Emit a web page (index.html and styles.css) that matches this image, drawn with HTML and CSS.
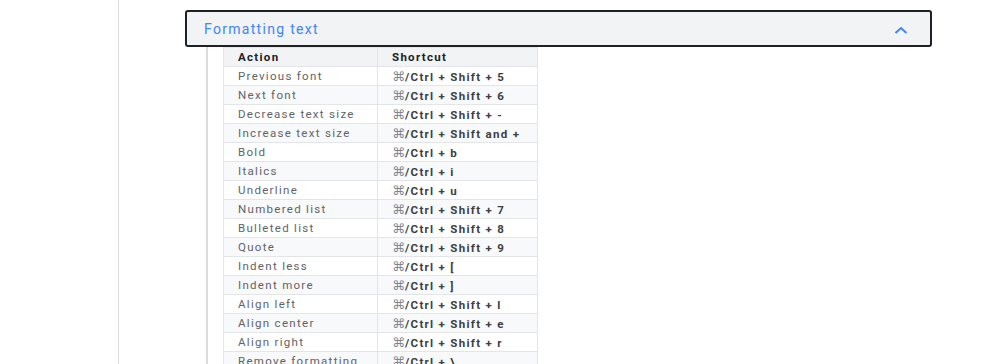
FILE: index.html
```html
<!DOCTYPE html>
<html lang="en">
<head>
  <meta charset="UTF-8">
  <title>Keyboard shortcuts</title>
  <link rel="stylesheet" href="styles.css">
</head>
<body>
  <div class="content">
    <div class="accordion">
      <button class="accordion-head" type="button">
        <span class="accordion-title">Formatting text</span>
        <svg class="chevron" width="14" height="8" viewBox="0 0 14 8">
          <path d="M1.5 7 L7 2 L12.5 7" fill="none" stroke="#4285f4" stroke-width="2"/>
        </svg>
      </button>
      <div class="accordion-body">
        <table class="shortcuts">
          <thead>
            <tr><th>Action</th><th>Shortcut</th></tr>
          </thead>
          <tbody>
            <tr><td>Previous font</td><td><span class="cmd">⌘</span>/Ctrl + Shift + 5</td></tr>
            <tr><td>Next font</td><td><span class="cmd">⌘</span>/Ctrl + Shift + 6</td></tr>
            <tr><td>Decrease text size</td><td><span class="cmd">⌘</span>/Ctrl + Shift + -</td></tr>
            <tr><td>Increase text size</td><td><span class="cmd">⌘</span>/Ctrl + Shift and +</td></tr>
            <tr><td>Bold</td><td><span class="cmd">⌘</span>/Ctrl + b</td></tr>
            <tr><td>Italics</td><td><span class="cmd">⌘</span>/Ctrl + i</td></tr>
            <tr><td>Underline</td><td><span class="cmd">⌘</span>/Ctrl + u</td></tr>
            <tr><td>Numbered list</td><td><span class="cmd">⌘</span>/Ctrl + Shift + 7</td></tr>
            <tr><td>Bulleted list</td><td><span class="cmd">⌘</span>/Ctrl + Shift + 8</td></tr>
            <tr><td>Quote</td><td><span class="cmd">⌘</span>/Ctrl + Shift + 9</td></tr>
            <tr><td>Indent less</td><td><span class="cmd">⌘</span>/Ctrl + [</td></tr>
            <tr><td>Indent more</td><td><span class="cmd">⌘</span>/Ctrl + ]</td></tr>
            <tr><td>Align left</td><td><span class="cmd">⌘</span>/Ctrl + Shift + l</td></tr>
            <tr><td>Align center</td><td><span class="cmd">⌘</span>/Ctrl + Shift + e</td></tr>
            <tr><td>Align right</td><td><span class="cmd">⌘</span>/Ctrl + Shift + r</td></tr>
            <tr><td>Remove formatting</td><td><span class="cmd">⌘</span>/Ctrl + \</td></tr>
          </tbody>
        </table>
      </div>
    </div>
  </div>
</body>
</html>
```
FILE: styles.css
```css
html, body {
  margin: 0;
  padding: 0;
  background-color: white;
  font-family: Roboto, "Noto Sans", sans-serif;
  height: 100%;
  overflow: hidden;
}
.content {
  margin-left: 118px;
  border-left: 1px solid #dadce0;
  padding: 10px 0 0 66px;
  min-height: 100%;
  box-sizing: border-box;
}
.accordion {
  width: 747px;
}
.accordion-head {
  display: flex;
  align-items: center;
  justify-content: space-between;
  width: 100%;
  height: 37px;
  padding: 0 22px 0 17px;
  box-sizing: border-box;
  background-color: #f1f3f4;
  border: 2px solid #202124;
  border-radius: 3px;
  font-family: inherit;
  cursor: pointer;
}
.accordion-title {
  font-size: 14px;
  letter-spacing: 1.3px;
  color: #4285f4;
}
.chevron {
  margin-top: 2px;
}
.accordion-body {
  margin-left: 21px;
  border-left: 2px solid #dadce0;
  padding-left: 15px;
}
.shortcuts {
  border-collapse: collapse;
  width: 315px;
  font-size: 11.5px;
  letter-spacing: 1.3px;
}
.shortcuts th,
.shortcuts td {
  height: 18px;
  padding: 0 0 0 14px;
  border: 1px solid #e3e5e8;
  text-align: left;
  white-space: nowrap;
}
.shortcuts th {
  background-color: #f1f3f4;
  color: #202124;
  font-weight: bold;
  letter-spacing: 1.3px;
}
.shortcuts th:first-child,
.shortcuts td:first-child {
  width: 139px;
}
.shortcuts td {
  color: #5f6368;
}
.shortcuts td + td {
  color: #3c4043;
  font-weight: bold;
  letter-spacing: 1.3px;
}
.cmd {
  font-family: "DejaVu Sans", sans-serif;
  font-weight: normal;
  font-size: 13px;
  color: #80868b;
  letter-spacing: 0;
}
.shortcuts tbody tr:nth-child(even) {
  background-color: #f8f9fa;
}
```
